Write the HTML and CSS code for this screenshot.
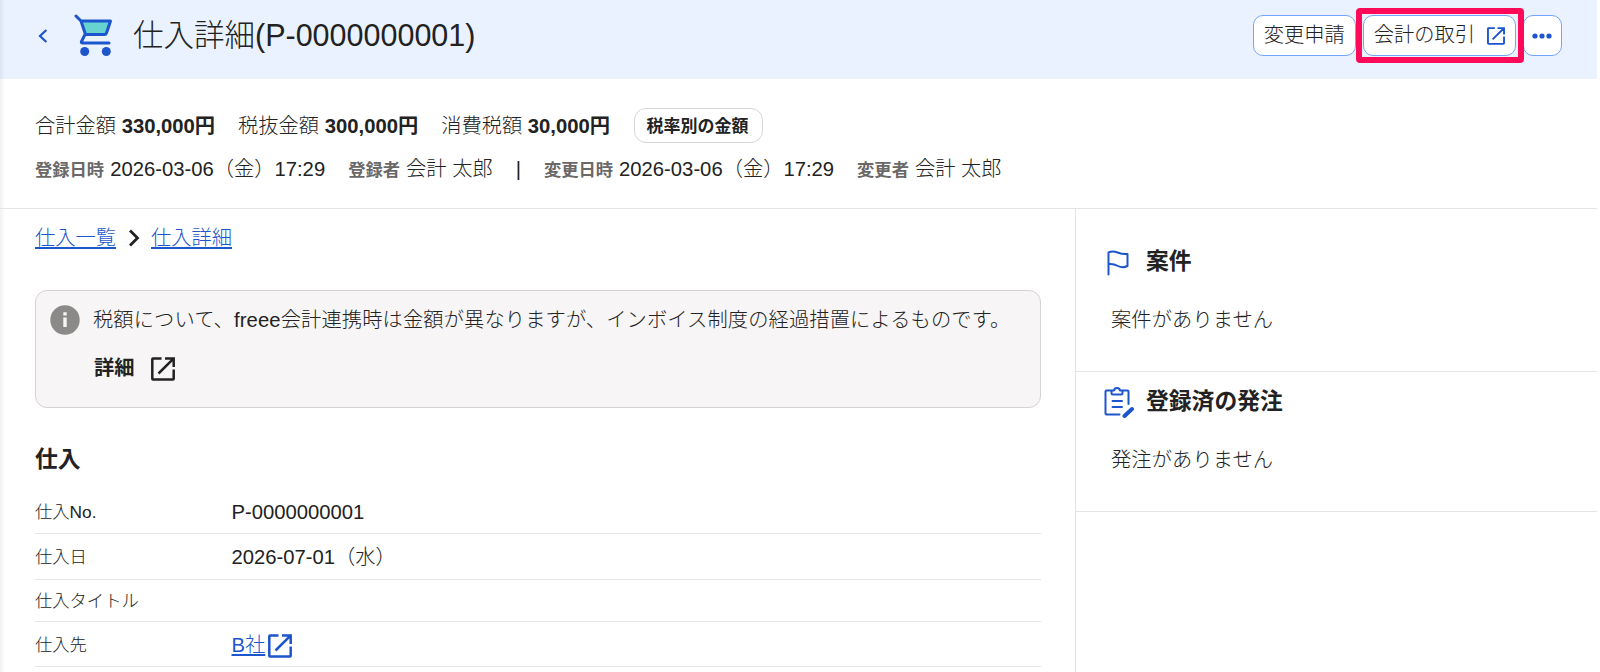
FILE: index.html
```html
<!DOCTYPE html>
<html lang="ja">
<head>
  <meta charset="UTF-8" />
  <title>仕入詳細</title>
  <meta name="viewport" content="width=device-width, initial-scale=1.0" />
  <link rel="stylesheet" href="styles.css">
</head>
<body>
  <svg class="symbols" width="0" height="0">
    <symbol id="open" viewBox="0 0 24 24">
      <path d="M10.500 1.500H2a.7.7 0 0 0-.7.7v19.600c0 .4.3.7.7.7h20a.7.7 0 0 0 .7-.7V12.500M14 1.500h8.700V10M22.500 1.700L7.500 16.500" fill="none" stroke="currentColor" stroke-width="2.500" />
    </symbol>
  </svg>

  <div class="page">
    <header class="page-header">
      <svg class="back" viewBox="0 0 10 16"><path d="M8.400 2L2 8l6.400 6" /></svg>
      <svg class="cart" viewBox="0 0 40 42">
        <path d="M7 7h29.500l-4.500 13.500H11z" fill="#66d3d1" />
        <path d="M2 2l5 5h29.500l-4 12q-.5 1.500-2 1.500H11.500L7 7M11 20.500l-3.500 7q-.5 1.500 1 1.500h26.500" />
        <circle cx="10.700" cy="37.500" r="4.500" /><circle cx="32.300" cy="37.500" r="4.500" />
      </svg>
      <h1>仕入詳細(P-0000000001)</h1>
      <div class="actions">
        <button class="btn">変更申請</button>
        <button class="btn btn-deal">会計の取引<svg class="icon-open"><use href="#open" /></svg></button>
        <button class="btn btn-more"><svg viewBox="0 0 20 6"><circle cx="3" cy="3" r="2.600" /><circle cx="10" cy="3" r="2.600" /><circle cx="17" cy="3" r="2.600" /></svg></button>
        <div class="highlight"></div>
      </div>
    </header>

    <section class="summary">
      <div class="amounts">
        <span>合計金額 <b>330,000円</b></span>
        <span>税抜金額 <b>300,000円</b></span>
        <span>消費税額 <b>30,000円</b></span>
        <button class="rate-btn">税率別の金額</button>
      </div>
      <div class="history">
        <span><b>登録日時</b>2026-03-06（金）17:29</span>
        <span><b>登録者</b>会計 太郎</span>
        <span class="bar">|</span>
        <span><b>変更日時</b>2026-03-06（金）17:29</span>
        <span><b>変更者</b>会計 太郎</span>
      </div>
    </section>

    <div class="columns">
      <main class="main">
        <nav class="breadcrumb">
          <a href="#">仕入一覧</a>
          <svg viewBox="0 0 12 18"><path d="M2 1.500L9.500 9 2 16.500" /></svg>
          <a href="#">仕入詳細</a>
        </nav>

        <div class="notice">
          <svg class="info" viewBox="0 0 30 30"><circle cx="15" cy="15" r="14.700" fill="#8c8989" /><path d="M13.300 12.500h3.400V22h-3.400zM13.300 7.300h3.400v3.200h-3.400z" fill="#f7f5f5" /></svg>
          <div class="notice-body">
            <p>税額について、freee会計連携時は金額が異なりますが、インボイス制度の経過措置によるものです。</p>
            <a class="more">詳細<svg class="icon-open"><use href="#open" /></svg></a>
          </div>
        </div>

        <h2>仕入</h2>
        <dl class="details">
          <div class="row"><dt>仕入No.</dt><dd>P-0000000001</dd></div>
          <div class="row row-date"><dt>仕入日</dt><dd>2026-07-01（水）</dd></div>
          <div class="row row-title"><dt>仕入タイトル</dt><dd></dd></div>
          <div class="row row-supplier"><dt>仕入先</dt><dd><a href="#">B社</a><svg class="icon-open"><use href="#open" /></svg></dd></div>
        </dl>
      </main>

      <aside class="side">
        <section class="card">
          <h2><svg viewBox="0 0 32 32"><path d="M5.500 28.500V6.500q4-2 9 0t10 1.500V20q-5 2.500-9.500 0T5.500 18" /></svg>案件</h2>
          <p>案件がありません</p>
        </section>
        <section class="card card-order">
          <h2><svg viewBox="0 0 32 32"><path d="M9 4.500H3.500Q2.500 4.500 2.500 5.500V27.500q0 1 1 1H16.500M19 4.500h5.500Q25.500 4.500 25.500 5.500V18M8.500 4.500h2.500q.5-2.500 3-2.500t3 2.500h2.500V7q0 1.500-1.500 1.500h-8Q8.500 8.500 8.500 7zM9.500 15h9.500M9.500 21h9.500" /><path class="pen" d="M21.500 30l7.500-7" /></svg>登録済の発注</h2>
          <p>発注がありません</p>
        </section>
      </aside>
    </div>
  </div>
</body>
</html>
```
FILE: styles.css
```css
:root {
  --blue: #1d55cd;
  --line: #e4e4e4;
  --text: #222;
}

* {
  box-sizing: border-box;
}

body {
  margin: 0;
  height: 672px;
  overflow: hidden;
  background: #fff;
  color: var(--text);
  font-family: "Liberation Sans", "Noto Sans CJK JP", sans-serif;
  font-size: 20.25px;
  font-weight: 300;
  line-height: 30px;
  white-space: nowrap;
}

h1, h2, p, dl, dd {
  margin: 0;
}

b {
  font-weight: bold;
}

svg {
  flex: none;
}

.symbols {
  position: absolute;
}

.page {
  display: flex;
  flex-direction: column;
  width: 1597px;
  height: 672px;
  box-shadow: inset 6px 0 6px -6px rgba(0, 0, 0, 0.12);
}

.page-header {
  display: flex;
  align-items: center;
  height: 79px;
  padding: 0 35px 8px 38px;
  background: #eaf2ff;
  box-shadow: inset 6px 0 6px -6px rgba(0, 0, 0, 0.12);
}

.page-header h1 {
  margin: 0 0 2px 19px;
  font-size: 30.5px;
  font-weight: 300;
  line-height: 44px;
}

.back {
  width: 10px;
  height: 16px;
  fill: none;
  stroke: var(--blue);
  stroke-width: 2.2;
}

.cart {
  width: 40px;
  height: 42px;
  margin: 0 0 2px 26px;
  fill: none;
  stroke: var(--blue);
  stroke-width: 3;
  stroke-linecap: round;
  stroke-linejoin: round;
}

.cart path:first-child {
  stroke: none;
}

.cart circle {
  fill: var(--blue);
  stroke: none;
}

.actions {
  position: relative;
  display: flex;
  gap: 7px;
  margin-left: auto;
}

.btn {
  display: flex;
  align-items: center;
  height: 41px;
  padding: 0 10px 2px;
  background: #fff;
  border: 1px solid #73a5ff;
  border-radius: 10px;
  color: var(--text);
  font: inherit;
}

.btn-deal .icon-open {
  width: 18px;
  height: 18px;
  margin: 3px 0 0 12px;
  color: var(--blue);
}

.btn-more {
  width: 39px;
  padding: 0 8px;
}

.btn-more svg {
  width: 20px;
  height: 6px;
  fill: var(--blue);
}

.highlight {
  position: absolute;
  top: -7px;
  right: 38px;
  width: 168px;
  height: 55px;
  border: 6px solid #ff0a58;
  border-radius: 4px;
}

.summary {
  height: 130px;
  padding: 29px 35px 0;
  border-bottom: 1px solid var(--line);
}

.amounts,
.history {
  display: flex;
  align-items: center;
}

.amounts {
  gap: 23px;
  height: 35px;
}

.rate-btn {
  width: 129px;
  height: 35px;
  margin-left: 1px;
  padding: 0 2px 3px 0;
  background: #fff;
  border: 1px solid #d8d6d6;
  border-radius: 12px;
  color: var(--text);
  font: bold 17px "Liberation Sans", "Noto Sans CJK JP", sans-serif;
}

.history {
  gap: 23px;
  height: 30px;
  margin-top: 11px;
}

.history b {
  margin-right: 6px;
  color: #6b6868;
  font-size: 17.3px;
}

.columns {
  display: flex;
  flex: 1;
}

.main {
  width: 1075px;
  padding: 14px 34px 0 35px;
}

a {
  color: var(--blue);
}

.breadcrumb {
  display: flex;
  align-items: center;
}

.breadcrumb svg {
  width: 12px;
  height: 18px;
  margin: 0 11px 0 12px;
  fill: none;
  stroke: #222;
  stroke-width: 2.8;
}

.notice {
  display: flex;
  height: 118px;
  margin-top: 37px;
  padding: 14px;
  background: #f7f5f5;
  border: 1px solid #d7d2d2;
  border-radius: 12px;
}

.info {
  width: 30px;
  height: 30px;
}

.notice-body {
  margin-left: 13px;
}

.notice-body p {
  letter-spacing: 0.12px;
}

.more {
  display: flex;
  align-items: center;
  margin: 18px 0 0 1px;
  color: var(--text);
  font-weight: bold;
}

.more .icon-open {
  width: 24px;
  height: 24px;
  margin: 2px 0 0 16px;
}

h2 {
  font-size: 22.8px;
  line-height: 32px;
}

.main h2 {
  margin-top: 35px;
}

.details {
  margin-top: 15px;
}

.row {
  display: flex;
  align-items: center;
  height: 44px;
  border-bottom: 1px solid var(--line);
}

.row-date {
  height: 46px;
}

.row-title {
  height: 42px;
}

.row-supplier {
  height: 45px;
  padding-top: 2px;
}

.row dt {
  width: 196.5px;
  font-size: 17.3px;
}

.row dd {
  display: flex;
  align-items: center;
}

.row .icon-open {
  width: 24px;
  height: 24px;
  margin: 2px 0 0 3px;
  color: var(--blue);
}

.side {
  flex: 1;
  border-left: 1px solid var(--line);
}

.card {
  height: 163px;
  padding: 35px 26px 0 27px;
  border-bottom: 1px solid var(--line);
}

.card-order {
  height: 140px;
  padding-top: 12px;
}

.card h2 {
  display: flex;
  align-items: center;
}

.card h2 svg {
  width: 32px;
  height: 32px;
  margin: 2px 11px 0 0;
  fill: none;
  stroke: var(--blue);
  stroke-width: 2;
  stroke-linejoin: round;
  stroke-linecap: round;
}

.card h2 .pen {
  stroke-width: 4;
}

.card p {
  margin: 27px 0 0 8px;
  letter-spacing: 0.1px;
}
```
